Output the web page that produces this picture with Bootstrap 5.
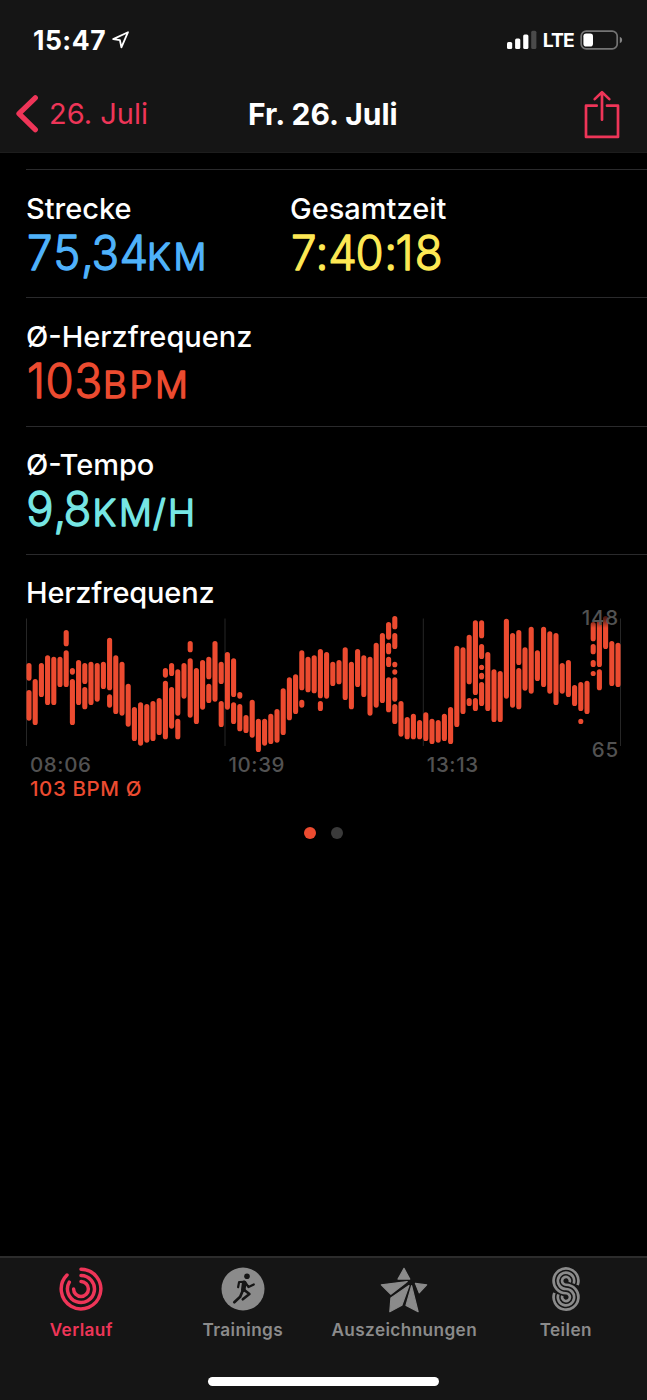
<!DOCTYPE html>
<html lang="de">
<head>
<meta charset="utf-8">
<meta name="viewport" content="width=device-width, initial-scale=1">
<title>Fr. 26. Juli</title>
<link href="https://cdn.jsdelivr.net/npm/bootstrap@5.3.0/dist/css/bootstrap.min.css" rel="stylesheet">
<style>
  :root { --pink: #ee3558; --heat: #ec4b30; --panel: #151515; --mute: #8b8b8b; }
  body { background: #000; color: #fff; font-family: Inter, "Liberation Sans", sans-serif; height: 1400px; overflow: hidden; }
  svg { display: block; overflow: visible; flex: none; }
  .topbar { height: 153px; background: var(--panel); border-bottom: 1px solid #1d1d1d; }
  .status { height: 80px; padding: 0 25px 0 33px; }
  .clock { font-size: 26.5px; font-weight: 700; line-height: 80px; letter-spacing: .5px; }
  .lte { font-size: 19.3px; font-weight: 650; line-height: 1; letter-spacing: -.8px; padding: 2px 6px 0 7px; }
  .titlebar { height: 68px; display: grid; grid-template-columns: 232px 1fr auto; padding: 0 27px 0 16px; }
  .back { color: var(--pink); font-size: 29px; text-decoration: none; gap: 11px; }
  .heading { font-size: 30px; font-weight: 700; }
  .share { color: var(--pink); margin-top: 1px; }
  .details { padding: 16px 0 0 26px; }
  .metric { height: 128px; border-top: 1px solid #2a2a2c; padding-top: 21px; }
  .metric.tall { height: 129px; }
  .metric.raised { padding-top: 20px; }
  .metric.trend { height: auto; }
  .half { width: 264px; }
  .label { font-size: 29px; font-weight: 530; line-height: 36px; letter-spacing: 0; white-space: nowrap; }
  .label.snug { letter-spacing: -.2px; }
  .value { font-weight: 300; font-size: 48px; stroke: currentColor; fill: currentColor; stroke-width: 1.3; stroke-linejoin: round; }
  .value .unit { font-size: 36.5px; stroke-width: 1.5; }
  .distance { color: #4fb2fb; } .duration { color: #fde854; } .pace { color: #76e6e4; }
  .axis { font-size: 20.5px; font-weight: 500; color: #525252; line-height: 24px; letter-spacing: .6px; }
  .axis span { width: 198.4px; flex: none; }
  .axis.pulse, .pulse { color: var(--heat); }
  .scale { font-size: 20.5px; font-weight: 500; fill: #525252; letter-spacing: .8px; }
  .dots { width: 595px; gap: 15px; margin-top: 26px; }
  .dot { width: 12px; height: 12px; border-radius: 50%; background: #3a3a3a; }
  .dot.on { background: var(--heat); }
  .tabbar { height: 144px; background: var(--panel); border-top: 2px solid #2c2c2c; color: var(--mute); }
  .tab { color: inherit; text-decoration: none; font-size: 17.2px; font-weight: 600; letter-spacing: .4px; line-height: 24px; width: 161.5px; padding-top: 8px; gap: 6px; }
  .tab.active { color: var(--pink); }
  .home { width: 231px; height: 9px; border-radius: 5px; background: #fff; margin: 0 auto 14px; }
</style>
</head>
<body class="d-flex flex-column">
<header class="topbar">
  <div class="status d-flex justify-content-between">
    <div class="d-flex align-items-center">
      <span class="clock">15:47</span>
      <svg class="ms-2" width="18" height="18" viewBox="114 30.5 18 18" fill="none" stroke="#fff" stroke-width="1.8" stroke-linejoin="round"><path d="M113.2 38.6 128 31.7 121.4 46.8 119.9 39.6Z"/></svg>
    </div>
    <div class="d-flex align-items-center">
      <svg width="29" height="20" viewBox="507 30 29 20" fill="#fff"><rect x="507" y="42" width="5.2" height="7" rx="1.5"/><rect x="515.1" y="38.4" width="5.2" height="10.6" rx="1.5"/><rect x="523.2" y="34.4" width="5.2" height="14.6" rx="1.5"/><rect x="531.2" y="30.7" width="5.2" height="18.3" rx="1.5" fill="#4a4a4a"/></svg>
      <span class="lte">LTE</span>
      <svg width="42" height="20" viewBox="580 30 42 20"><rect x="581.2" y="31.1" width="36" height="17.8" rx="5" fill="none" stroke="#747474" stroke-width="1.7"/><rect x="583.4" y="33.4" width="9.6" height="13.2" rx="2.8" fill="#fff"/><path d="M619.8 36.7q2.4 1 2.4 3.3t-2.4 3.3z" fill="#868686"/></svg>
    </div>
  </div>
  <div class="titlebar align-items-center">
    <a class="back d-flex align-items-center" href="#">
      <svg width="22" height="38" viewBox="16 94.5 22 38" fill="none" stroke="currentColor" stroke-width="5.3" stroke-linecap="round" stroke-linejoin="round"><path d="M35.3 97.3 19 113.2l16.3 15.9"/></svg>
      <span>26. Juli</span>
    </a>
    <span class="heading">Fr. 26. Juli</span>
    <a class="share" href="#" aria-label="Teilen">
      <svg width="36" height="48" viewBox="584 90.9 36 48" fill="none" stroke="currentColor" stroke-width="2.7" stroke-linecap="round" stroke-linejoin="round"><path d="M596.7 105.6H586v31.2h32v-31.2h-11M602 92.3v27.3M594.7 99l7.3-7 7.3 7"/></svg>
    </a>
  </div>
</header>

<main class="details flex-grow-1">
  <section class="metric d-flex">
    <div class="half"><span class="label d-block">Strecke</span>
      <svg class="value distance" width="200" height="56" viewBox="26 0 200 56"><text y="43" transform="scale(.95 1)" x="28.3 56.1 85.4 96.4 125.8">75,34</text><text class="unit" y="43" x="147 173.5">KM</text></svg></div>
    <div class="half"><span class="label d-block">Gesamtzeit</span>
      <svg class="value duration" width="200" height="56" viewBox="290 0 200 56"><text y="43" transform="scale(.95 1)" x="306.2 332.1 345.5 374.3 404.5 416.4 436.6">7:40:18</text></svg></div>
  </section>
  <section class="metric tall">
    <span class="label d-block">Ø-Herzfrequenz</span>
    <svg class="value pulse" width="200" height="56" viewBox="26 0 200 56"><text y="43" transform="scale(.95 1)" x="28.4 48 78.3">103</text><text class="unit" y="43" x="103 129.5 155">BPM</text></svg>
  </section>
  <section class="metric raised">
    <span class="label d-block">Ø-Tempo</span>
    <svg class="value pace" width="200" height="56" viewBox="26 0 200 56"><text y="43" transform="scale(.95 1)" x="27.7 56.4 66.8">9,8</text><text class="unit" y="43" x="92.5 119 153 168">KM/H</text></svg>
  </section>
  <section class="metric raised trend">
    <span class="label snug d-block">Herzfrequenz</span>
    <svg width="595" height="142" viewBox="26 611 595 142">
      <defs><linearGradient id="fade" x1="0" y1="0" x2="0" y2="1"><stop offset="0" stop-opacity=".8"/><stop offset=".4" stop-opacity=".6"/><stop offset="1" stop-opacity="0"/></linearGradient></defs>
      <path d="M26.5 618.5V746M225 618.5V746M423.3 618.5V746M620.5 618.5V746" stroke="#262626"/>
      <path id="bars" fill="none" stroke="#ec4b30" stroke-width="5.1" stroke-linecap="round"/>
      <rect x="581" y="613" width="37" height="15" fill="url(#fade)"/>
      <g class="scale" text-anchor="end"><text x="619" y="625.3">148</text><text x="619" y="757">65</text></g>
    </svg>
    <div class="axis d-flex ps-1"><span>08:06</span><span>10:39</span><span>13:13</span></div>
    <div class="axis ps-1 pulse">103 BPM Ø</div>
  </section>
  <div class="dots d-flex justify-content-center"><i class="dot on"></i><i class="dot"></i></div>
</main>

<footer class="tabbar d-flex flex-column justify-content-between">
  <nav class="d-flex justify-content-center">
    <a class="tab active d-flex flex-column align-items-center" href="#">
      <svg width="46" height="46" viewBox="-23 -23 46 46" fill="none" stroke="currentColor" stroke-width="3.5" stroke-linecap="round"><path d="M0-19.8A19.8 19.8 0 1 1-14-14M0-13.5A13.5 13.5 0 1 1-11.7-6.8M0-7.4A7.4 7.4 0 1 1-7.4 0"/></svg>
      <span>Verlauf</span></a>
    <a class="tab d-flex flex-column align-items-center" href="#">
      <svg width="46" height="46" viewBox="-23 -23 46 46" stroke-linecap="round" stroke-linejoin="round"><circle r="21.5" fill="#8b8b8b"/><circle cx="4" cy="-12.7" r="2.8" fill="#151515"/><g fill="none" stroke="#151515" stroke-width="2.2"><path d="M1-7.2-3.9-7-4.9-1.8M2.6-6 5.5-2 10.8-4.6"/><path stroke-width="2.7" d="M1 .8 6.4 5-.2 10.2M-.2 1.5-2.8 7.8-8.7 13.2"/><path stroke-width="4.6" d="M1.2-6.2.3.8"/></g></svg>
      <span>Trainings</span></a>
    <a class="tab d-flex flex-column align-items-center" href="#">
      <svg width="46" height="46" viewBox="-23 -23.7 46 46" fill="currentColor" stroke="currentColor" stroke-width="1.2" stroke-linejoin="round"><path d="M0-21.3-6-10.6H5.8ZM-22.7-4.9 3.3-8.1-13.2 4.5ZM11.4-6.3 22.7-4.9 15.2 3.1ZM5-4.2-13.1 8.4-14.2 22-2.1 15.6ZM7.6-4 2 15.7 14.1 22Z"/></svg>
      <span>Auszeichnungen</span></a>
    <a class="tab d-flex flex-column align-items-center" href="#">
      <svg width="46" height="46" viewBox="-23 -23 46 46" fill="none" stroke="currentColor" stroke-width="2.7"><path d="M11.65-3.9A12.4 12.4 0 1 0 0 4.25A3.9 3.9 0 1 1-3.66 6.8M7.66-5.36A8.15 8.15 0 1 0 0 0A8.15 8.15 0 1 1-7.66 5.36M3.66-6.8A3.9 3.9 0 1 0 0-4.25A12.4 12.4 0 1 1-11.65 3.9"/></svg>
      <span>Teilen</span></a>
  </nav>
  <div class="home"></div>
</footer>

<script src="https://cdn.jsdelivr.net/npm/bootstrap@5.3.0/dist/js/bootstrap.bundle.min.js"></script>
<script>
// One entry per interval; each "top-bottom" pair is a span of readings, in thirds of a pixel below y = 605.
const readings = `174-227,255-347 222-360 174-276 151-300 155-300 155-246 75-124,136-246 189-209,222-360 165-300 174-237,246-313
170-300 174-290 170-252 98-256,268-308 151-327 170-332 236-365 306-408 292-422 297-413 288-408 279-390 189-218,227-403 174-213,246-371
193-332,341-403 174-281 108-142,160-338 189-357 165-314 155-223,236-294 108-290 170-237,288-366 141-314 160-276,292-357 261-281,297-379
330-384 284-398 341-441 341-422 326-417 312-413 250-390 217-346 208-327 136-256,284-308 155-262 151-265 132-280,288-318 141-281
170-243 165-238 127-285 170-313 132-246 151-276 155-332 113-308 84-294 51-104,113-148,155-186,217-322
33-73,84-132,170-187,193-209,217-290,297-357 288-395 336-403 326-403 345-403 322-408 341-417 345-413 326-408 306-417 122-366 127-327
89-238,279-303 46-270,279-318 46-100,117-162,179-195,203-223,231-303 141-318 193-351 198-351 41-281 84-308 75-180,189-313 127-257
65-266 136-228 65-246 79-266 84-300 174-266 165-276 240-303 231-318,341-357 227-327 51-109,117-148,165-186,198-213 46-186,193-256
33-132 108-243 113-246`.split(/\s+/);
document.getElementById('bars').setAttribute('d', readings.map((entry, i) =>
  entry.split(',').map(span => {
    const [top, bottom] = span.split('-').map(v => 605 + v / 3);
    const start = top + 2.55, end = Math.max(start + .01, bottom - 2.55);
    return `M${(29 + i * 6.2).toFixed(1)} ${start.toFixed(2)}V${end.toFixed(2)}`;
  }).join('')).join(''));
</script>
</body>
</html>
